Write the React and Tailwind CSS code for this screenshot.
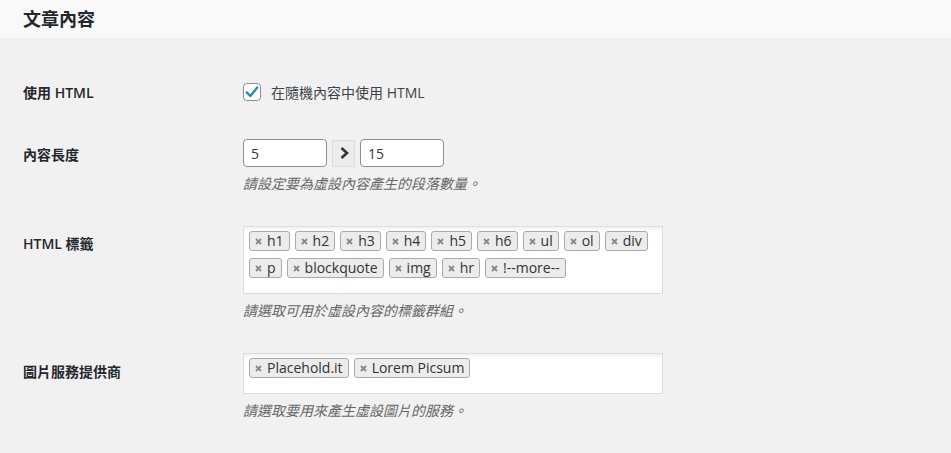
import React from "react";

const font = { fontFamily: '"Open Sans", "Noto Sans CJK TC", sans-serif' };

const Tag = ({ label }) => (
    <span className="flex items-center h-[20px] pl-[5px] pr-[5px] gap-[5px] border border-[#aaaaaa] rounded-[3px] bg-[#ececec] text-[14px] text-[#333333] leading-none">
        <svg width="7" height="7" viewBox="0 0 7 7">
            <path d="M1 1 L6 6 M6 1 L1 6" stroke="#888888" strokeWidth="1.8" />
        </svg>
        <span>{label}</span>
    </span>
);

const TagBox = ({ tags }) => (
    <div className="w-[420px] border border-[#dddddd] bg-white pl-[5px] pr-[6px] pt-[4px] pb-[15px] shadow-[inset_0_5px_4px_-3px_rgba(0,0,0,0.07)]">
        <div className="flex flex-wrap gap-x-[5px] gap-y-[7px]">
            {tags.map((t) => (
                <Tag key={t} label={t} />
            ))}
        </div>
    </div>
);

const Row = ({ label, labelTop, children }) => (
    <div className="flex items-start">
        <div
            className="w-[243px] shrink-0 pl-[23px] text-[14px] leading-[20px] font-semibold text-[#23282d]"
            style={{ marginTop: labelTop }}
        >
            {label}
        </div>
        <div>{children}</div>
    </div>
);

const Desc = ({ children }) => (
    <p className="mt-[7px] text-[14px] leading-[20px] italic text-[#666666]">{children}</p>
);

const App = () => {
    const htmlTags = ["h1", "h2", "h3", "h4", "h5", "h6", "ul", "ol", "div", "p", "blockquote", "img", "hr", "!--more--"];

    return (
        <div className="bg-[#f1f1f1] min-h-screen" style={font}>
            <div className="bg-[#f9f9f9] h-[38px] flex items-center pl-[23px]">
                <h2 className="text-[18px] font-semibold text-[#23282d] leading-none">文章內容</h2>
            </div>

            <div className="pt-[45px]">
                <Row label="使用 HTML" labelTop="0px">
                    <label className="flex items-center gap-[10px] h-[18px]">
                        <span className="w-[18px] h-[18px] border border-[#8c8f94] rounded-[4px] bg-white flex items-center justify-center">
                            <svg width="16" height="16" viewBox="0 0 20 20">
                                <path d="M3.5 10.5 L8 15 L16.5 4.5" fill="none" stroke="#1e8cbe" strokeWidth="3" strokeLinecap="round" strokeLinejoin="round" />
                            </svg>
                        </span>
                        <span className="text-[14px] text-[#3c434a]">在隨機內容中使用 HTML</span>
                    </label>
                </Row>

                <div className="mt-[36px]">
                    <Row label="內容長度" labelTop="6px">
                        <div className="flex items-center">
                            <input
                                type="text"
                                defaultValue="5"
                                className="w-[84px] h-[28px] px-[7px] border border-[#8c8f94] rounded-[4px] bg-white text-[14px] text-[#32373c] outline-none"
                            />
                            <span className="ml-[5px] w-[23px] h-[27px] border border-[#dcdcdc] bg-[#ececec] flex items-center justify-center">
                                <svg width="14" height="16" viewBox="0 0 14 16">
                                    <path d="M4.5 3 L10 8 L4.5 13" fill="none" stroke="#333333" strokeWidth="2.6" />
                                </svg>
                            </span>
                            <input
                                type="text"
                                defaultValue="15"
                                className="ml-[5px] w-[84px] h-[28px] px-[7px] border border-[#8c8f94] rounded-[4px] bg-white text-[14px] text-[#32373c] outline-none"
                            />
                        </div>
                        <Desc>請設定要為虛設內容產生的段落數量。</Desc>
                    </Row>
                </div>

                <div className="mt-[32px]">
                    <Row label="HTML 標籤" labelTop="8px">
                        <TagBox tags={htmlTags} />
                        <Desc>請選取可用於虛設內容的標籤群組。</Desc>
                    </Row>
                </div>

                <div className="mt-[32px]">
                    <Row label="圖片服務提供商" labelTop="9px">
                        <TagBox tags={["Placehold.it", "Lorem Picsum"]} />
                        <Desc>請選取要用來產生虛設圖片的服務。</Desc>
                    </Row>
                </div>
            </div>
        </div>
    );
};

export default App;
